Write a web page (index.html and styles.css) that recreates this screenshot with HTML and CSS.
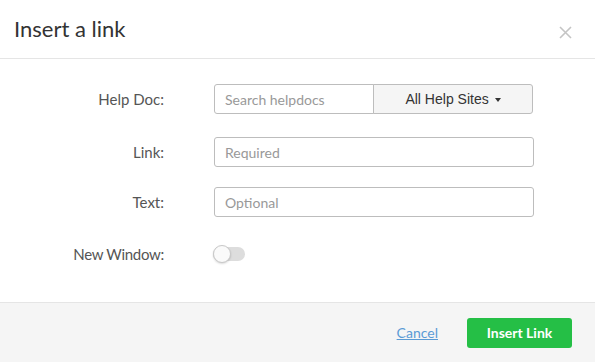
FILE: index.html
```html
<!DOCTYPE html>
<html lang="en">
<head>
  <meta charset="UTF-8" />
  <title>Insert a link</title>
  <link rel="stylesheet" href="styles.css">
</head>
<body>
  <div class="modal">
    <header class="modal-header">
      <h1 class="modal-title">Insert a link</h1>
      <button class="close" aria-label="Close">
        <svg width="13" height="13" viewBox="0 0 13 13"><path d="M1 1L12 12M12 1L1 12" stroke="#c4c4c4" stroke-width="1.6" fill="none"/></svg>
      </button>
    </header>

    <form class="modal-body">
      <div class="row">
        <label for="helpdoc">Help Doc:</label>
        <div class="input-group">
          <input id="helpdoc" type="text" placeholder="Search helpdocs" />
          <button type="button" class="dropdown">All Help Sites <span class="caret"></span></button>
        </div>
      </div>
      <div class="row">
        <label for="link">Link:</label>
        <input id="link" type="text" placeholder="Required" />
      </div>
      <div class="row">
        <label for="text">Text:</label>
        <input id="text" type="text" placeholder="Optional" />
      </div>
      <div class="row toggle-row">
        <label>New Window:</label>
        <span class="toggle"><span class="knob"></span></span>
      </div>
    </form>

    <footer class="modal-footer">
      <a href="#" class="cancel">Cancel</a>
      <button class="primary">Insert Link</button>
    </footer>
  </div>
</body>
</html>
```

FILE: styles.css
```css
* { box-sizing: border-box; }
body {
  margin: 0;
  font-family: 'Lato', sans-serif;
  background: #fff;
  color: #333;
}
.modal {
  width: 595px;
  height: 362px;
  display: flex;
  flex-direction: column;
}
.modal-header {
  height: 59px;
  border-bottom: 1px solid #e5e5e5;
  display: flex;
  align-items: center;
  justify-content: space-between;
  padding: 0 23px 0 14px;
}
.modal-title {
  margin: 0 0 2px;
  font-size: 22px;
  font-weight: 400;
  color: #333;
}
.close {
  background: none;
  border: none;
  padding: 0;
  margin-top: 6px;
  cursor: pointer;
  display: flex;
}
.modal-body {
  flex: 1;
  padding: 25px 0 0;
}
.row {
  display: flex;
  align-items: center;
  margin-bottom: 20px;
}
.row:first-child { margin-bottom: 23px; }
.row label {
  width: 164px;
  text-align: right;
  margin-right: 50px;
  font-size: 15px;
  color: #555;
}
.row input {
  width: 320px;
  height: 30px;
  border: 1px solid #bdbdbd;
  border-radius: 3px;
  padding: 0 10px;
  font-family: inherit;
  font-size: 14px;
  color: #333;
}
.row input::placeholder { color: #999; }
.input-group {
  display: flex;
  width: 319px;
}
.input-group input {
  width: 160px;
  border-radius: 3px 0 0 3px;
}
.dropdown {
  flex: 1;
  height: 30px;
  margin-left: -1px;
  border: 1px solid #bdbdbd;
  border-radius: 0 3px 3px 0;
  background: #f5f5f5;
  font-family: 'Liberation Sans', Arial, sans-serif;
  font-size: 14px;
  color: #333;
  cursor: pointer;
}
.caret {
  display: inline-block;
  vertical-align: middle;
  margin-left: 2px;
  border-top: 4px solid #333;
  border-left: 3px solid transparent;
  border-right: 3px solid transparent;
}
.toggle-row { margin-top: 28px; }
.toggle-row label { letter-spacing: -0.3px; }
.toggle {
  position: relative;
  width: 32px;
  height: 14px;
  margin-left: -1px;
  background: #ddd;
  border-radius: 7px;
}
.knob {
  position: absolute;
  left: 0;
  top: -2px;
  width: 18px;
  height: 18px;
  border-radius: 50%;
  background: #fafafa;
  border: 1px solid #c8c8c8;
  box-shadow: 0 1px 2px rgba(0,0,0,0.15);
}
.modal-footer {
  height: 60px;
  border-top: 1px solid #e5e5e5;
  background: #f5f5f5;
  display: flex;
  align-items: center;
  justify-content: flex-end;
  padding: 0 23px 0 0;
}
.cancel {
  color: #5b9bd5;
  font-size: 14px;
  margin-right: 29px;
}
.primary {
  width: 105px;
  height: 30px;
  background: #25bf46;
  border: none;
  border-radius: 3px;
  color: #fff;
  font-family: inherit;
  font-weight: 700;
  font-size: 14px;
  cursor: pointer;
}
```
